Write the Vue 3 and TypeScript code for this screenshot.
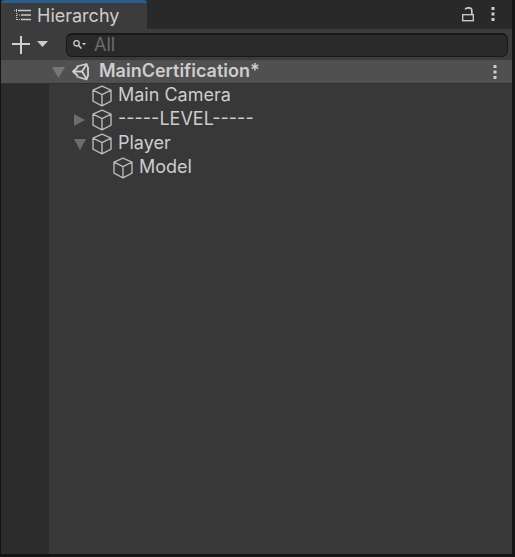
<script setup lang="ts">
import { ref } from 'vue'

interface TreeItem {
  name: string
  depth: number
  state: 'leaf' | 'open' | 'closed'
}

const query = ref('')
const items = ref<TreeItem[]>([
  { name: 'Main Camera', depth: 1, state: 'leaf' },
  { name: '-----LEVEL-----', depth: 1, state: 'closed' },
  { name: 'Player', depth: 1, state: 'open' },
  { name: 'Model', depth: 2, state: 'leaf' },
])
</script>

<template>
  <main class="panel">
    <header class="tabs">
      <button class="tab" type="button">
        <svg width="18" height="14" viewBox="0 0 18 14" fill="none" stroke="#c8c8c8">
          <path d="M4 1.5H17M7 6H17M7 10.5H17" stroke-width="1.3" />
          <path d="M0 1.5H4M2.5 0V12M3 6H6M3 10.5H6" stroke-dasharray="1 1" />
        </svg>
        <span>Hierarchy</span>
      </button>
      <div class="window-tools">
        <button type="button" aria-label="Lock">
          <svg width="12" height="16" viewBox="0 0 12 16" fill="none" stroke="#c8c8c8" stroke-width="1.4">
            <rect x="0.7" y="7.7" width="10.6" height="6" />
            <path d="M9.8 7.5V3.6Q9.8 .8 6.5 .8Q3.7 .8 3.2 2.6" stroke-width="1.7" />
          </svg>
        </button>
        <button type="button" aria-label="Window menu">
          <svg width="4" height="16" viewBox="0 0 4 16" fill="#cecece">
            <path d="M.5 0h3v3h-3zM.5 5.5h3v3h-3zM.5 11h3v3h-3z" />
          </svg>
        </button>
      </div>
    </header>

    <div class="toolbar">
      <button type="button" aria-label="Create">
        <svg width="36" height="18" viewBox="0 0 36 18">
          <path d="M9 0V18M0 8H18" stroke="#d0d0d0" stroke-width="2" />
          <path d="M25 5H36L30.5 11Z" fill="#cbcbcb" />
        </svg>
      </button>
      <label class="search">
        <svg width="13" height="10" viewBox="0 0 13 10" fill="none" stroke="#c4c4c4">
          <circle cx="3.5" cy="3.3" r="2.7" stroke-width="1.4" />
          <path d="M5.5 5.5L8.5 8.5" stroke-width="1.7" />
          <path d="M9 3H13L11 5.5Z" fill="#c4c4c4" stroke="none" />
        </svg>
        <input v-model="query" type="text" placeholder="All" aria-label="Search hierarchy" />
      </label>
    </div>

    <div class="scene">
      <button class="arrow" type="button" aria-label="Toggle scene">
        <svg width="13" height="12" viewBox="0 0 13 12"><path d="M0 1H13L6.5 12Z" fill="#777" /></svg>
      </button>
      <svg class="logo" width="18" height="18" viewBox="0 0 18 18" fill="none" stroke="#d0d0d0" stroke-width="1.8" stroke-linejoin="round">
        <path d="M6 4L1 8.5L6 13M4.5 3.5L14.5 1L16.2 5.5M4.5 13.5L14.5 16.5L16.2 12M16 4V13.5" />
        <path d="M2 8.5H10L14.5 1.5M10 8.5L14.5 15.5" />
      </svg>
      <span class="label scene-name">MainCertification*</span>
      <button type="button" aria-label="Scene menu">
        <svg width="4" height="16" viewBox="0 0 4 16" fill="#cecece">
          <path d="M.5 1h3v3h-3zM.5 6.5h3v3h-3zM.5 12h3v3h-3z" />
        </svg>
      </button>
    </div>

    <div class="body">
      <div class="gutter"></div>
      <ul class="tree">
        <li v-for="item in items" :key="item.name" class="item" :class="'depth-' + item.depth">
          <span v-if="item.state === 'leaf'" class="arrow"></span>
          <button v-else class="arrow" type="button" :aria-label="'Toggle ' + item.name">
            <svg width="12" height="12" viewBox="0 0 12 12" fill="#6c6c6c">
              <path v-if="item.state === 'open'" d="M0 1H12L6 12Z" />
              <path v-else d="M0 0V12L11 6Z" />
            </svg>
          </button>
          <svg class="cube" width="20" height="22" viewBox="0 0 20 22" fill="none" stroke="#b8b8b8" stroke-width="1.4" stroke-linejoin="round">
            <path d="M10 1.2L19 5.2V16.2L10 20.8L1 16.2V5.2ZM1 5.2L10 9.6L19 5.2M10 9.6V20.8" />
          </svg>
          <span class="label">{{ item.name }}</span>
        </li>
      </ul>
    </div>
  </main>
</template>

<style>
body {
  margin: 0;
  background: #141414;
}
</style>

<style scoped>
.panel {
  box-sizing: border-box;
  display: flex;
  flex-direction: column;
  min-height: 100vh;
  border: solid #141414;
  border-width: 0 3px 3px 1px;
  background: #383838;
  color: #cdcdcd;
  font: 18px/24px Inter, sans-serif;
}

button {
  display: flex;
  align-items: center;
  padding: 0;
  border: 0;
  background: none;
  color: inherit;
  font: inherit;
}

svg {
  display: block;
  flex: none;
}

.tabs {
  display: flex;
  justify-content: space-between;
  height: 29px;
  background: #292929;
}

.tab {
  gap: 5px;
  padding: 0 28px 0 13px;
  border-top: 3px solid #2c5d87;
  border-radius: 3px 3px 0 0;
  background: #3c3c3c;
}

.window-tools {
  display: flex;
  align-items: center;
  gap: 17px;
  padding-right: 17px;
}

.toolbar {
  display: flex;
  align-items: center;
  gap: 18px;
  box-sizing: border-box;
  height: 31px;
  padding: 0 4px 0 11px;
  background: #3c3c3c;
}

.search {
  display: flex;
  flex: 1;
  align-items: center;
  gap: 8px;
  box-sizing: border-box;
  min-width: 0;
  height: 24px;
  padding: 0 6px;
  border: 1px solid #181818;
  border-top-width: 2px;
  border-radius: 6px;
  background: #2a2a2a;
}

.search input {
  flex: 1;
  min-width: 0;
  padding: 0;
  border: 0;
  outline: 0;
  background: none;
  color: #cdcdcd;
  font: inherit;
}

.search input::placeholder {
  color: #6c6c6c;
  opacity: 1;
}

.scene {
  display: flex;
  align-items: center;
  box-sizing: border-box;
  height: 24px;
  padding: 0 15px 0 51px;
  border-bottom: 1px solid #303030;
  background: #505050;
}

.label {
  padding-bottom: 2px;
}

.logo {
  margin: 0 9px 0 7px;
}

.scene-name {
  flex: 1;
  font-weight: 600;
}

.body {
  display: flex;
  flex: 1;
}

.gutter {
  width: 48px;
  background: #2c2c2c;
}

.tree {
  flex: 1;
  margin: 0;
  padding: 0;
  list-style: none;
}

.item {
  display: flex;
  align-items: center;
  height: 24px;
}

.depth-1 {
  padding-left: 25px;
}

.depth-2 {
  padding-left: 46px;
}

.item .arrow {
  width: 12px;
}

.cube {
  margin: 0 6px;
}
</style>
